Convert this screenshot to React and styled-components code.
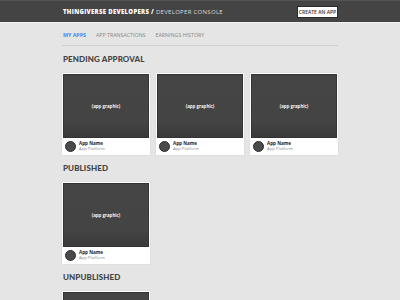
import React from 'react'
import styled, { createGlobalStyle } from 'styled-components'

const Global = createGlobalStyle`
	html, body {
		margin: 0;
		padding: 0;
		background: #e5e5e5;
		font-family: "Open Sans", "Liberation Sans", sans-serif;
	}
`;

const Header = styled.div`
	background: #444;
	border-top: 1px solid #555;
	border-bottom: 1px solid #f2f2f2;
	box-sizing: border-box;
	height: 23px;
`;

const Wrap = styled.div`
	width: 276px;
	margin: 0 auto;
`;

const HeaderInner = styled(Wrap)`
	height: 100%;
	display: flex;
	align-items: center;
	justify-content: space-between;
	padding-left: 1px;
	box-sizing: border-box;
`;

const Brand = styled.div`
	font-size: 6px;
	color: #ddd;
	letter-spacing: 0.3px;
	b {
		color: #fff;
		font-weight: 800;
	}
`;

const CreateButton = styled.button`
	font-family: inherit;
	font-size: 5px;
	font-weight: 600;
	color: #333;
	background: #fff;
	border: 1px solid #2a2a2a;
	height: 12px;
	width: 41px;
	padding: 0;
	cursor: pointer;
`;

const Tabs = styled(Wrap)`
	display: flex;
	gap: 10px;
	padding: 9px 1px 6px;
	box-sizing: border-box;
	border-bottom: 1px solid #d0d0d0;
`;

const Tab = styled.div`
	font-size: 5.3px;
	line-height: 7px;
	font-weight: ${p => (p.active ? 700 : 400)};
	color: ${p => (p.active ? '#2f8ef0' : '#888')};
`;

const Section = styled(Wrap)`
	padding-top: 8px;
`;

const Heading = styled.h2`
	margin: 0 0 8px 1px;
	font-family: Lato, "Open Sans", sans-serif;
	font-size: 8px;
	line-height: 11px;
	font-weight: 900;
	color: #444;
	letter-spacing: 0.1px;
`;

const Grid = styled.div`
	display: grid;
	grid-template-columns: repeat(3, 88px);
	gap: 6px;
`;

const Card = styled.div`
	background: #fff;
	padding: 1px;
	box-shadow: 0 0 1px rgba(0, 0, 0, 0.15);
`;

const Graphic = styled.div`
	height: 64px;
	background: linear-gradient(#454545 0%, #444 75%, #3a3a3a 100%);
	border: 1px solid #333;
	box-sizing: border-box;
	display: flex;
	align-items: center;
	justify-content: center;
	color: #f4f4f4;
	font-size: 4.4px;
	font-weight: 700;
`;

const Footer = styled.div`
	height: 16px;
	display: flex;
	align-items: center;
	gap: 3px;
	padding-left: 2px;
`;

const Avatar = styled.div`
	width: 11px;
	height: 11px;
	border-radius: 50%;
	background: #4a4a4a;
	border: 1px solid #2e2e2e;
	box-sizing: border-box;
`;

const Meta = styled.div`
	display: flex;
	flex-direction: column;
	line-height: 5px;
`;

const AppName = styled.span`
	font-size: 4.6px;
	font-weight: 700;
	color: #222;
`;

const Platform = styled.span`
	font-size: 4.2px;
	color: #888;
`;

function AppCard() {
	return (
		<Card>
			<Graphic>(app graphic)</Graphic>
			<Footer>
				<Avatar />
				<Meta>
					<AppName>App Name</AppName>
					<Platform>App Platform</Platform>
				</Meta>
			</Footer>
		</Card>
	);
}

const sections = [
	{ title: 'PENDING APPROVAL', count: 3 },
	{ title: 'PUBLISHED', count: 1 },
	{ title: 'UNPUBLISHED', count: 1 },
];

export default function App() {
	return (
		<>
			<Global />
			<Header>
				<HeaderInner>
					<Brand><b>THINGIVERSE DEVELOPERS /</b> DEVELOPER CONSOLE</Brand>
					<CreateButton>CREATE AN APP</CreateButton>
				</HeaderInner>
			</Header>
			<Tabs>
				<Tab active>MY APPS</Tab>
				<Tab>APP TRANSACTIONS</Tab>
				<Tab>EARNINGS HISTORY</Tab>
			</Tabs>
			{sections.map(s => (
				<Section key={s.title}>
					<Heading>{s.title}</Heading>
					<Grid>
						{Array.from({ length: s.count }).map((_, i) => <AppCard key={i} />)}
					</Grid>
				</Section>
			))}
		</>
	);
}
